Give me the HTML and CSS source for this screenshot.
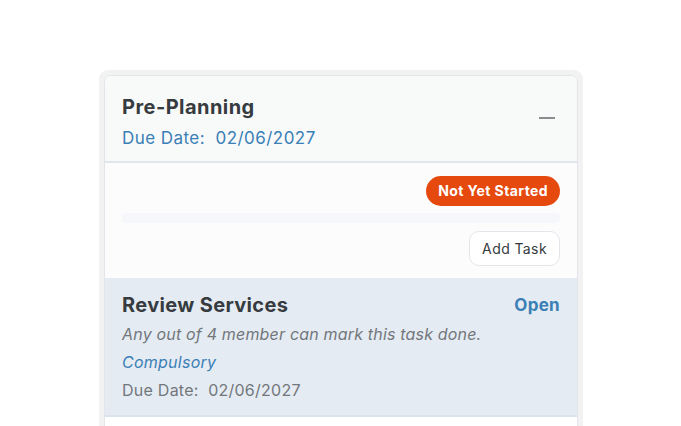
FILE: index.html
```html
<!DOCTYPE html>
<html lang="en">
<head>
  <meta charset="UTF-8" />
  <title>Pre-Planning</title>
  <link rel="stylesheet" href="styles.css">
</head>
<body>
  <div class="stage">
    <div class="stage__card">
      <div class="stage__head">
        <div>
          <h2 class="stage__title">Pre-Planning</h2>
          <p class="stage__due">Due Date:&nbsp; 02/06/2027</p>
        </div>
        <span class="stage__toggle"></span>
      </div>

      <div class="stage__body">
        <span class="badge">Not Yet Started</span>
        <div class="progress"></div>
        <button class="btn">Add Task</button>
      </div>

      <div class="task">
        <div class="task__top">
          <h3 class="task__title">Review Services</h3>
          <a href="#" class="task__link">Open</a>
        </div>
        <p class="task__rule">Any out of 4 member can mark this task done.</p>
        <p class="task__kind">Compulsory</p>
        <p class="task__due">Due Date:&nbsp; 02/06/2027</p>
      </div>

      <div class="task task--empty"></div>
    </div>
  </div>
</body>
</html>
```

FILE: styles.css
```css
:root {
  --blue: #3a7fb6;
  --text-dark: #363b40;
  --text-gray: #72777c;
  --border: #e2e6ea;
  --orange: #e6490d;
}

body {
  margin: 0;
  background-color: #fff;
  font-family: 'Inter', 'Roboto', sans-serif;
  color: var(--text-dark);
}

.stage {
  margin: 70px 0 0 99px;
  width: 474px;
  padding: 5px 5px 0;
  background-color: #f2f2f2;
  border-radius: 9px 9px 0 0;
  height: 351px;
  overflow: hidden;
}

.stage__card {
  background-color: #fcfcfd;
  border: 1px solid var(--border);
  border-radius: 7px 7px 0 0;
  overflow: hidden;
}

.stage__head {
  display: flex;
  justify-content: space-between;
  align-items: center;
  padding: 19px 22px 11px 17px;
  background-color: #f8f9f9;
  border-bottom: 2px solid var(--border);
}

.stage__title {
  margin: 0 0 7px;
  font-size: 20px;
  font-weight: 700;
  line-height: 24px;
  letter-spacing: 0.45px;
}

.stage__due {
  margin: 0;
  font-size: 17px;
  line-height: 24px;
  letter-spacing: 0.45px;
  color: var(--blue);
}

.stage__toggle {
  display: block;
  width: 16px;
  height: 2px;
  background-color: #8a8d90;
  margin-bottom: 10px;
}

.stage__body {
  display: flex;
  flex-direction: column;
  align-items: flex-end;
  padding: 13px 17px 12px;
}

.badge {
  background-color: var(--orange);
  color: #fff;
  font-size: 14px;
  font-weight: 700;
  line-height: 30px;
  letter-spacing: 0.4px;
  padding: 0 12px;
  border-radius: 15px;
}

.progress {
  align-self: stretch;
  height: 10px;
  margin: 7px 0 8px;
  background-color: #f5f7fa;
  border-radius: 4px;
}

.btn {
  font-family: inherit;
  font-size: 14px;
  letter-spacing: 0.4px;
  color: var(--text-dark);
  background-color: #fff;
  border: 1px solid var(--border);
  border-radius: 10px;
  padding: 0 12px;
  height: 35px;
}

.task {
  padding: 15px 17px 11px;
  background-color: #e5ebf2;
  border-bottom: 2px solid #dbe3ec;
}

.task--empty {
  background-color: #fff;
  border: none;
  height: 20px;
}

.task__top {
  display: flex;
  justify-content: space-between;
  align-items: center;
}

.task__title {
  margin: 0;
  font-size: 20px;
  font-weight: 700;
  line-height: 24px;
  letter-spacing: 0.35px;
}

.task__link {
  color: var(--blue);
  font-size: 17px;
  font-weight: 700;
  letter-spacing: 0.3px;
  text-decoration: none;
}

.task__rule,
.task__kind,
.task__due {
  margin: 0;
  font-size: 16px;
  line-height: 28px;
  letter-spacing: 0.25px;
  color: var(--text-gray);
}

.task__rule {
  font-style: italic;
  letter-spacing: 0.18px;
  margin-top: 3px;
}

.task__kind {
  font-style: italic;
  color: var(--blue);
}
```
